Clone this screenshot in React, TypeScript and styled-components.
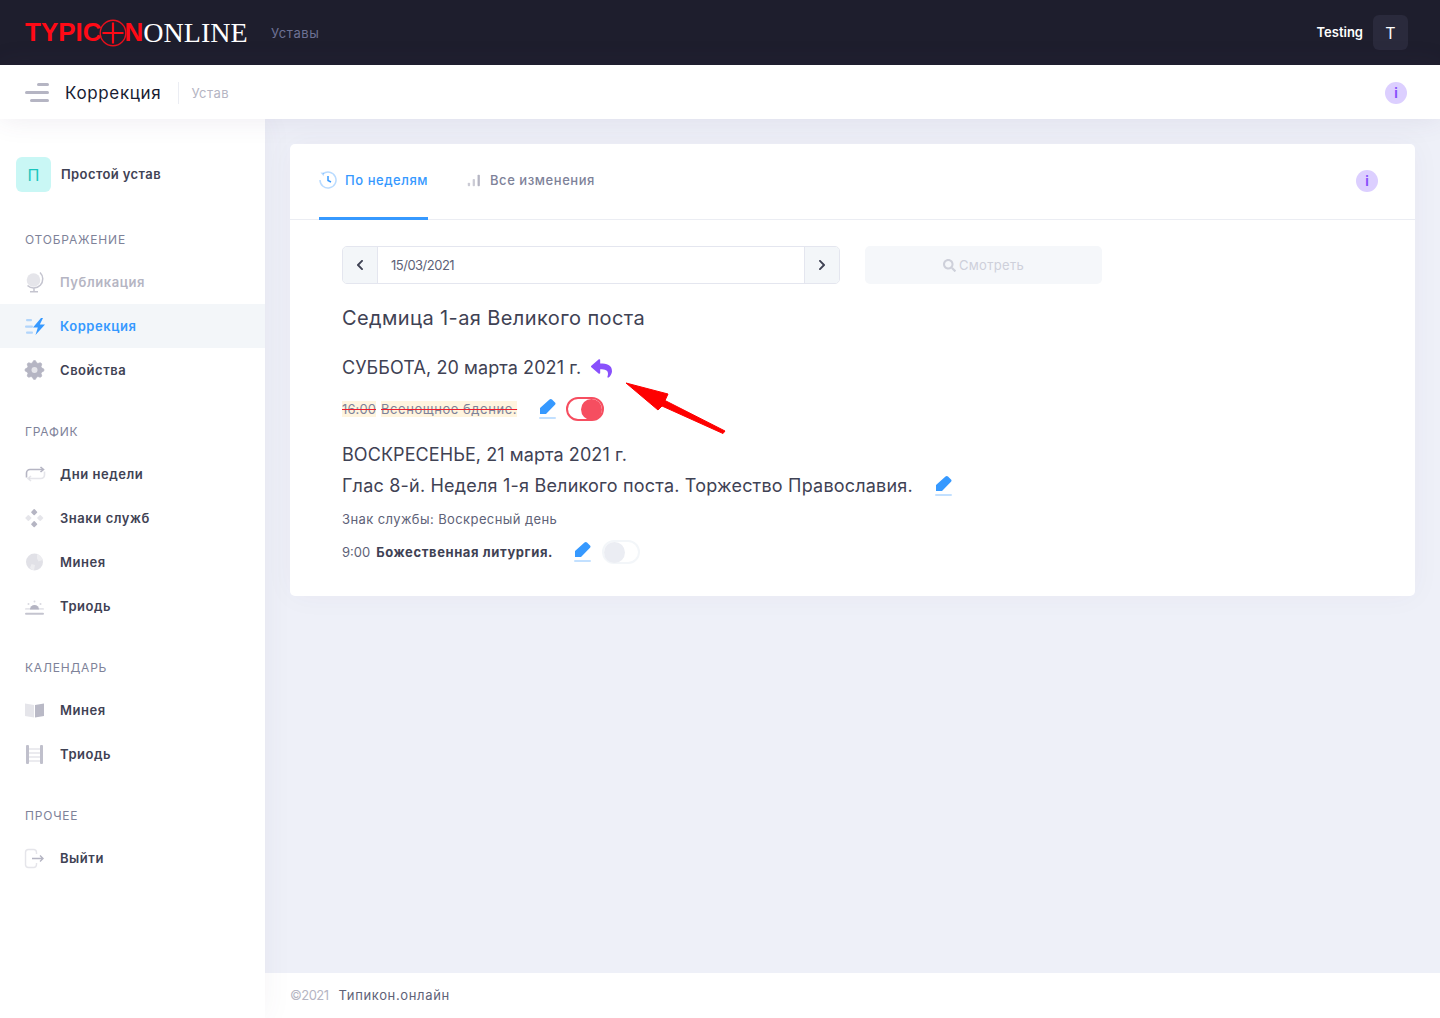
import React from 'react';
import styled, { createGlobalStyle } from 'styled-components';
import { FaReply, FaSearch, FaChevronLeft, FaChevronRight } from 'react-icons/fa';

const FONT = `Inter, "Noto Sans", sans-serif`;

const GlobalStyle = createGlobalStyle`
  html, body {
    margin: 0;
    padding: 0;
    background: #eef0f8;
    font-family: ${FONT};
    color: #3f4254;
  }
  * { box-sizing: border-box; }
`;

const Page = styled.div`
  position: relative;
  display: flex;
  flex-direction: column;
  height: 1018px;
  overflow: hidden;
`;

const Header = styled.header`
  flex: none;
  height: 65px;
  background: #1e1e2d;
  display: flex;
  align-items: center;
  padding: 0 32px 0 25px;
`;

const Logo = styled.div`
  display: flex;
  align-items: center;
  width: 222px;
  margin-right: 24px;
`;

const LogoRed = styled.span`
  font-family: "Liberation Sans", sans-serif;
  font-weight: 700;
  font-size: 26px;
  color: #ff0a16;
`;

const LogoCross = styled.svg`
  flex: none;
  width: 30px;
  height: 30px;
  margin: 0 -3px 0 -4px;
`;

const LogoWhite = styled.span`
  font-family: "Liberation Serif", serif;
  font-size: 28px;
  color: #fff;
`;

const HeaderLink = styled.span`
  font-size: 13px;
  letter-spacing: 0.6px;
  color: #6d7194;
`;

const HeaderUser = styled.div`
  margin-left: auto;
  display: flex;
  align-items: center;
  gap: 10px;
`;

const UserName = styled.span`
  font-size: 13px;
  font-weight: 600;
  color: #fff;
  padding-bottom: 2px;
`;

const Avatar = styled.div`
  width: 35px;
  height: 35px;
  border-radius: 6px;
  background: #2a2a3c;
  color: #fff;
  font-size: 16px;
  display: flex;
  align-items: center;
  justify-content: center;
`;

const SubHeader = styled.div`
  position: relative;
  z-index: 2;
  flex: none;
  height: 54px;
  background: #fff;
  display: flex;
  align-items: center;
  padding: 2px 33px 0 25px;
  box-shadow: 0 0 28px rgba(82, 63, 105, 0.1);
`;

const Burger = styled.div`
  width: 24px;
  display: flex;
  flex-direction: column;
  align-items: flex-end;
  gap: 5px;
  margin: -2px 16px 0 0;
`;

const BurgerBar = styled.span<{ $width: number }>`
  height: 3px;
  border-radius: 2px;
  background: #b5b5c3;
  width: ${p => p.$width}px;
`;

const SubTitle = styled.span`
  font-size: 17px;
  letter-spacing: 0.65px;
  color: #181c32;
  padding-right: 17px;
  border-right: 1px solid #ebedf3;
  line-height: 22px;
`;

const SubCrumb = styled.span`
  font-size: 13px;
  letter-spacing: 0.5px;
  color: #b5b5c3;
  margin-left: 12px;
`;

const InfoBadge = styled.span`
  flex: none;
  width: 22px;
  height: 22px;
  border-radius: 50%;
  background: #dccfff;
  color: #8950fc;
  font-size: 13px;
  font-weight: 700;
  display: flex;
  align-items: center;
  justify-content: center;
  margin-left: auto;
`;

const Body = styled.div`
  flex: 1;
  display: flex;
  min-height: 0;
`;

const Aside = styled.aside`
  position: relative;
  z-index: 1;
  flex: none;
  width: 265px;
  background: #fff;
  padding-top: 38px;
  box-shadow: 0 0 28px rgba(82, 63, 105, 0.06);
`;

const Brand = styled.div`
  display: flex;
  align-items: center;
  gap: 10px;
  height: 35px;
  padding-left: 16px;
  margin-bottom: 37px;
`;

const BrandMark = styled.span`
  width: 35px;
  height: 35px;
  border-radius: 6px;
  background: #c9f7f5;
  color: #1bc5bd;
  font-size: 16px;
  display: flex;
  align-items: center;
  justify-content: center;
`;

const BrandName = styled.span`
  font-size: 13px;
  font-weight: 600;
  letter-spacing: 0.4px;
  color: #3f4254;
  padding-bottom: 2px;
`;

const NavSection = styled.section`
  margin-bottom: 29px;
`;

const NavLabel = styled.div`
  height: 20px;
  line-height: 22px;
  margin-bottom: 11px;
  padding-left: 25px;
  font-size: 12px;
  letter-spacing: 0.8px;
  color: #7e8299;
`;

const NavItem = styled.div<{ $active?: boolean; $muted?: boolean }>`
  height: 44px;
  display: flex;
  align-items: center;
  gap: 13px;
  padding-left: 23px;
  font-size: 13px;
  font-weight: 600;
  letter-spacing: 0.55px;
  background: ${p => (p.$active ? '#f3f6f9' : 'transparent')};
  color: ${p => (p.$active ? '#3699ff' : p.$muted ? '#b5b5c3' : '#3f4254')};
`;

const NavIcon = styled.svg`
  flex: none;
  width: 24px;
  height: 24px;
`;

const Main = styled.main`
  flex: 1;
  min-width: 0;
  display: flex;
  flex-direction: column;
`;

const Content = styled.div`
  flex: 1;
  padding: 25px 25px 0;
`;

const Card = styled.div`
  background: #fff;
  border-radius: 5px;
  box-shadow: 0 0 30px rgba(82, 63, 105, 0.04);
`;

const CardTabs = styled.div`
  height: 76px;
  display: flex;
  align-items: stretch;
  gap: 38px;
  padding: 0 37px 0 29px;
  border-bottom: 1px solid #ebedf3;
`;

const Tab = styled.div<{ $active?: boolean }>`
  display: flex;
  align-items: center;
  gap: 8px;
  padding-bottom: 2px;
  margin-bottom: -1px;
  font-size: 13px;
  font-weight: 500;
  letter-spacing: 0.55px;
  border-bottom: 3px solid ${p => (p.$active ? '#3699ff' : 'transparent')};
  color: ${p => (p.$active ? '#3699ff' : '#7e8299')};
`;

const TabIcon = styled.svg<{ $size: number }>`
  flex: none;
  width: ${p => p.$size}px;
  height: ${p => p.$size}px;
`;

const TabInfo = styled.div`
  margin-left: auto;
  display: flex;
  align-items: center;
  padding-bottom: 2px;
`;

const CardBody = styled.div`
  padding: 26px 52px 32px;
`;

const DateRow = styled.div`
  display: flex;
  gap: 25px;
  margin-bottom: 19px;
`;

const DateGroup = styled.div`
  width: 498px;
  height: 38px;
  display: flex;
  border: 1px solid #e4e6ef;
  border-radius: 5px;
  overflow: hidden;
`;

const DateStep = styled.span`
  flex: none;
  width: 34px;
  background: #f3f6f9;
  color: #3f4254;
  font-size: 12px;
  display: flex;
  align-items: center;
  justify-content: center;
`;

const DateValue = styled.div`
  flex: 1;
  border-left: 1px solid #e4e6ef;
  border-right: 1px solid #e4e6ef;
  padding-left: 13px;
  display: flex;
  align-items: center;
  font-size: 13px;
  letter-spacing: -0.5px;
  color: #5e6278;
`;

const ViewButton = styled.div`
  width: 237px;
  height: 38px;
  border-radius: 5px;
  background: #f5f7fa;
  color: #ced0da;
  font-size: 13px;
  letter-spacing: 0.3px;
  display: flex;
  align-items: center;
  justify-content: center;
  gap: 3px;
`;

const WeekTitle = styled.h3`
  margin: 0 0 19px;
  font-size: 20px;
  font-weight: 400;
  line-height: 30px;
  letter-spacing: 0.4px;
  color: #3f4254;
`;

const DayTitle = styled.h4<{ $bottom?: number; $spacing?: number }>`
  height: 30px;
  padding-top: 2px;
  margin: 0 0 ${p => p.$bottom ?? 0}px;
  font-size: 18px;
  font-weight: 400;
  line-height: 30px;
  letter-spacing: ${p => p.$spacing ?? 0.08}px;
  color: #3f4254;
  display: flex;
  align-items: center;
`;

const UndoMark = styled.span`
  display: flex;
  color: #8950fc;
  font-size: 21px;
  margin-left: 10px;
`;

const TitlePencil = styled.span`
  display: flex;
  margin-left: 21px;
`;

const ServiceRow = styled.div<{ $gap: number; $bottom?: number }>`
  height: 24px;
  display: flex;
  align-items: center;
  margin-bottom: ${p => p.$bottom ?? 0}px;
  font-size: 13px;
  gap: ${p => p.$gap}px;
`;

const ServiceLabel = styled.span<{ $width: number; $gap: number }>`
  flex: none;
  width: ${p => p.$width}px;
  margin-right: 13px;
  display: flex;
  align-items: center;
  gap: ${p => p.$gap}px;
  white-space: nowrap;
`;

const Struck = styled.span<{ $spacing: number }>`
  background: #fff4de;
  color: #7e8299;
  letter-spacing: ${p => p.$spacing}px;
  text-decoration: line-through;
  text-decoration-color: #f01c2c;
`;

const ServiceTime = styled.span`
  color: #5e6278;
`;

const ServiceName = styled.span`
  font-weight: 700;
  letter-spacing: 0.6px;
  color: #3f4254;
`;

const ServiceSign = styled.div`
  height: 20px;
  line-height: 20px;
  margin: 9px 0 11px;
  font-size: 13px;
  letter-spacing: 0.4px;
  color: #5e6278;
`;

const PencilIcon = styled.svg`
  flex: none;
  width: 20px;
  height: 24px;
`;

const Toggle = styled.span<{ $on?: boolean }>`
  flex: none;
  width: 38px;
  height: 24px;
  border-radius: 12px;
  background: #fff;
  border: 2px solid ${p => (p.$on ? '#f64e60' : '#f3f6f9')};
  display: flex;
  align-items: center;
  justify-content: ${p => (p.$on ? 'flex-end' : 'flex-start')};
`;

const ToggleKnob = styled.span<{ $on?: boolean }>`
  flex: none;
  width: 21px;
  height: 21px;
  border-radius: 50%;
  background: ${p => (p.$on ? '#f64e60' : '#ebedf3')};
`;

const Footer = styled.footer`
  flex: none;
  height: 45px;
  background: #fff;
  padding: 0 0 2px 25px;
  display: flex;
  align-items: center;
  gap: 10px;
  font-size: 13px;
`;

const Copyright = styled.span`
  color: #b5b5c3;
  letter-spacing: -0.55px;
`;

const FooterLink = styled.span`
  color: #5e6278;
  letter-spacing: 0.65px;
`;

const RedArrow = styled.svg`
  position: absolute;
  left: 620px;
  top: 375px;
  width: 110px;
  height: 65px;
  z-index: 3;
`;

const GRAY = '#b5b5c3';

// 8 teeth around the centre of the nav icon box
const gearPoints = Array.from({ length: 32 }, (_, i) => {
  const angle = ((i - 0.5) * Math.PI) / 16;
  const radius = i % 4 < 2 ? 9.4 : 7.4;
  return `${(11.5 + radius * Math.cos(angle)).toFixed(2)},${(12 + radius * Math.sin(angle)).toFixed(2)}`;
}).join(' ');

const Pencil = () => (
  <PencilIcon viewBox="0 0 20 24">
    <path d="M2 11 11.5 2.5c.8-.8 1.8-.8 2.5 0l3 3c.7.7.7 1.6 0 2.3L8 17H2z" fill="#3699ff" />
    <rect x="1" y="20" width="17" height="2" rx="1" fill="#3699ff" opacity="0.3" />
  </PencilIcon>
);

const GlobeIcon = () => (
  <NavIcon viewBox="0 0 24 24">
    <circle cx="10.5" cy="10" r="6.8" fill={GRAY} opacity="0.35" />
    <path d="M17 2.5a9 9 0 0 1-12.5 13" fill="none" stroke={GRAY} strokeWidth="1.5" opacity="0.8" />
    <path d="M11 18.5v3M7 21.8h8" fill="none" stroke={GRAY} strokeWidth="1.5" opacity="0.8" />
  </NavIcon>
);

const BoltIcon = () => (
  <NavIcon viewBox="0 0 24 24">
    <path d="M18 4 10 13.5h4.8L12.5 21l9.5-10.5h-5.2L20 4z" fill="#3699ff" />
    <rect x="3" y="5" width="6" height="2.2" rx="1" fill="#3699ff" opacity="0.35" />
    <rect x="2" y="11.5" width="8" height="2.2" rx="1" fill="#3699ff" opacity="0.35" />
    <rect x="3" y="17.5" width="7" height="2.2" rx="1" fill="#3699ff" opacity="0.35" />
  </NavIcon>
);

const GearIcon = () => (
  <NavIcon viewBox="0 0 24 24">
    <polygon points={gearPoints} fill={GRAY} stroke={GRAY} strokeWidth="0.8" strokeLinejoin="round" />
    <circle cx="11.5" cy="12" r="3" fill="#fff" opacity="0.65" />
  </NavIcon>
);

const RepeatIcon = () => (
  <NavIcon viewBox="0 0 24 24">
    <path d="M3.5 15.5V11a3.5 3.5 0 0 1 3.5-3.5h13" fill="none" stroke={GRAY} strokeWidth="1.6" />
    <path d="M17.5 5l3 2.5-3 2.5" fill="none" stroke={GRAY} strokeWidth="1.6" />
    <path d="M21.5 9.5V13a3.5 3.5 0 0 1-3.5 3.5H6" fill="none" stroke={GRAY} strokeWidth="1.6" opacity="0.35" />
    <path d="M8 14l-3 2.5L8 19" fill="none" stroke={GRAY} strokeWidth="1.6" opacity="0.35" />
  </NavIcon>
);

const DiamondsIcon = () => (
  <NavIcon viewBox="0 0 24 24">
    <rect x="8.8" y="3.8" width="4.8" height="4.8" rx="0.8" transform="rotate(45 11.2 6.2)" fill={GRAY} />
    <rect x="8.8" y="15.8" width="4.8" height="4.8" rx="0.8" transform="rotate(45 11.2 18.2)" fill={GRAY} />
    <rect x="3" y="9.6" width="4.8" height="4.8" rx="0.8" transform="rotate(45 5.4 12)" fill={GRAY} opacity="0.35" />
    <rect x="14.8" y="9.6" width="4.8" height="4.8" rx="0.8" transform="rotate(45 17.2 12)" fill={GRAY} opacity="0.35" />
  </NavIcon>
);

const OrbIcon = () => (
  <NavIcon viewBox="0 0 24 24">
    <circle cx="11.5" cy="12" r="8.5" fill={GRAY} opacity="0.4" />
    <path d="M14 4a8.5 8.5 0 0 1 5.5 6l-4 1.5-1.5-3zM7 18l1.5-4 3.5 1-1 5.5A8.5 8.5 0 0 1 7 18z" fill="#fff" opacity="0.4" />
  </NavIcon>
);

const SunriseIcon = () => (
  <NavIcon viewBox="0 0 24 24">
    <path d="M7 15.5a4.5 4.5 0 0 1 9 0z" fill={GRAY} />
    <rect x="2" y="14" width="19" height="1.8" rx="0.9" fill={GRAY} opacity="0.35" />
    <rect x="2" y="18.8" width="19" height="2" rx="1" fill={GRAY} opacity="0.8" />
    <circle cx="11.5" cy="7.5" r="1" fill={GRAY} opacity="0.5" />
    <circle cx="5.5" cy="10" r="1" fill={GRAY} opacity="0.5" />
    <circle cx="17.5" cy="10" r="1" fill={GRAY} opacity="0.5" />
  </NavIcon>
);

const BookIcon = () => (
  <NavIcon viewBox="0 0 24 24">
    <path d="M2 5.5 11 7v12.5l-9-1.5z" fill={GRAY} opacity="0.35" />
    <path d="M12 7l9-1.5V18l-9 1.5z" fill={GRAY} opacity="0.95" />
  </NavIcon>
);

const LadderIcon = () => (
  <NavIcon viewBox="0 0 24 24">
    <rect x="3" y="3" width="3" height="19" rx="1" fill={GRAY} opacity="0.85" />
    <rect x="17" y="3" width="3" height="19" rx="1" fill={GRAY} opacity="0.85" />
    <path d="M6 7h11M6 11h11M6 15h11M6 19h11" stroke={GRAY} strokeWidth="1.7" opacity="0.35" />
  </NavIcon>
);

const ExitIcon = () => (
  <NavIcon viewBox="0 0 24 24">
    <rect x="2.5" y="3.5" width="11" height="18" rx="3" fill="none" stroke={GRAY} strokeWidth="1.4" opacity="0.35" />
    <rect x="11" y="8" width="4" height="9" fill="#fff" />
    <path d="M9 12.5h11M17 9.5l3 3-3 3" fill="none" stroke={GRAY} strokeWidth="1.4" />
  </NavIcon>
);

const nav = [
  {
    label: 'ОТОБРАЖЕНИЕ',
    items: [
      { text: 'Публикация', icon: <GlobeIcon />, muted: true },
      { text: 'Коррекция', icon: <BoltIcon />, active: true },
      { text: 'Свойства', icon: <GearIcon /> },
    ],
  },
  {
    label: 'ГРАФИК',
    items: [
      { text: 'Дни недели', icon: <RepeatIcon /> },
      { text: 'Знаки служб', icon: <DiamondsIcon /> },
      { text: 'Минея', icon: <OrbIcon /> },
      { text: 'Триодь', icon: <SunriseIcon /> },
    ],
  },
  {
    label: 'КАЛЕНДАРЬ',
    items: [
      { text: 'Минея', icon: <BookIcon /> },
      { text: 'Триодь', icon: <LadderIcon /> },
    ],
  },
  {
    label: 'ПРОЧЕЕ',
    items: [{ text: 'Выйти', icon: <ExitIcon /> }],
  },
];

export default function App() {
  return (
    <Page>
      <GlobalStyle />
      <Header>
        <Logo>
          <LogoRed>TYPIC</LogoRed>
          <LogoCross viewBox="0 0 30 30">
            <circle cx="15" cy="15" r="12.8" fill="none" stroke="#e8101c" strokeWidth="1.4" />
            <path d="M15 4.5v21M4.5 15h21" stroke="#ff0a16" strokeWidth="2.2" />
          </LogoCross>
          <LogoRed>N</LogoRed>
          <LogoWhite>ONLINE</LogoWhite>
        </Logo>
        <HeaderLink>Уставы</HeaderLink>
        <HeaderUser>
          <UserName>Testing</UserName>
          <Avatar>T</Avatar>
        </HeaderUser>
      </Header>

      <SubHeader>
        <Burger>
          <BurgerBar $width={12} />
          <BurgerBar $width={24} />
          <BurgerBar $width={19} />
        </Burger>
        <SubTitle>Коррекция</SubTitle>
        <SubCrumb>Устав</SubCrumb>
        <InfoBadge>i</InfoBadge>
      </SubHeader>

      <Body>
        <Aside>
          <Brand>
            <BrandMark>П</BrandMark>
            <BrandName>Простой устав</BrandName>
          </Brand>
          {nav.map(section => (
            <NavSection key={section.label}>
              <NavLabel>{section.label}</NavLabel>
              {section.items.map(item => (
                <NavItem key={item.text} $active={item.active} $muted={item.muted}>
                  {item.icon}
                  {item.text}
                </NavItem>
              ))}
            </NavSection>
          ))}
        </Aside>

        <Main>
          <Content>
            <Card>
              <CardTabs>
                <Tab $active>
                  <TabIcon $size={18} viewBox="0 0 18 18">
                    <path d="M4 2.8A8 8 0 1 1 1 9" fill="none" stroke="#3699ff" strokeWidth="1.5" opacity="0.35" />
                    <path d="M1.5 1.5 5 1.8 4.6 5.2z" fill="#3699ff" opacity="0.35" />
                    <path d="M9 5v4.5l3 1.5" fill="none" stroke="#3699ff" strokeWidth="1.5" />
                  </TabIcon>
                  По неделям
                </Tab>
                <Tab>
                  <TabIcon $size={16} viewBox="0 0 18 18">
                    <rect x="2" y="12" width="2.6" height="4" rx="1" fill={GRAY} opacity="0.7" />
                    <rect x="7.5" y="8" width="2.6" height="8" rx="1" fill={GRAY} opacity="0.7" />
                    <rect x="13" y="3" width="2.6" height="13" rx="1" fill={GRAY} />
                  </TabIcon>
                  Все изменения
                </Tab>
                <TabInfo>
                  <InfoBadge>i</InfoBadge>
                </TabInfo>
              </CardTabs>
              <CardBody>
                <DateRow>
                  <DateGroup>
                    <DateStep><FaChevronLeft /></DateStep>
                    <DateValue>15/03/2021</DateValue>
                    <DateStep><FaChevronRight /></DateStep>
                  </DateGroup>
                  <ViewButton>
                    <FaSearch />
                    Смотреть
                  </ViewButton>
                </DateRow>

                <WeekTitle>Седмица 1-ая Великого поста</WeekTitle>

                <DayTitle $bottom={15}>
                  СУББОТА, 20 марта 2021 г.
                  <UndoMark><FaReply /></UndoMark>
                </DayTitle>
                <ServiceRow $gap={8} $bottom={18}>
                  <ServiceLabel $width={175} $gap={5}>
                    <Struck $spacing={0.1}>16:00</Struck>
                    <Struck $spacing={0.55}>Всенощное бдение.</Struck>
                  </ServiceLabel>
                  <Pencil />
                  <Toggle $on><ToggleKnob $on /></Toggle>
                </ServiceRow>

                <DayTitle $bottom={1}>ВОСКРЕСЕНЬЕ, 21 марта 2021 г.</DayTitle>
                <DayTitle $spacing={0.2}>
                  Глас 8-й. Неделя 1-я Великого поста. Торжество Православия.
                  <TitlePencil><Pencil /></TitlePencil>
                </DayTitle>
                <ServiceSign>Знак службы: Воскресный день</ServiceSign>
                <ServiceRow $gap={9}>
                  <ServiceLabel $width={209} $gap={6}>
                    <ServiceTime>9:00</ServiceTime>
                    <ServiceName>Божественная литургия.</ServiceName>
                  </ServiceLabel>
                  <Pencil />
                  <Toggle><ToggleKnob /></Toggle>
                </ServiceRow>
              </CardBody>
            </Card>
          </Content>
          <Footer>
            <Copyright>©2021</Copyright>
            <FooterLink>Типикон.онлайн</FooterLink>
          </Footer>
        </Main>
      </Body>

      <RedArrow viewBox="0 0 110 65">
        <path d="M6 8 48 19 45 25.5 105 56 103 58.5 42 31 38 35z" fill="#fe0000" stroke="#fe0000" strokeWidth="1" strokeLinejoin="round" />
      </RedArrow>
    </Page>
  );
}
